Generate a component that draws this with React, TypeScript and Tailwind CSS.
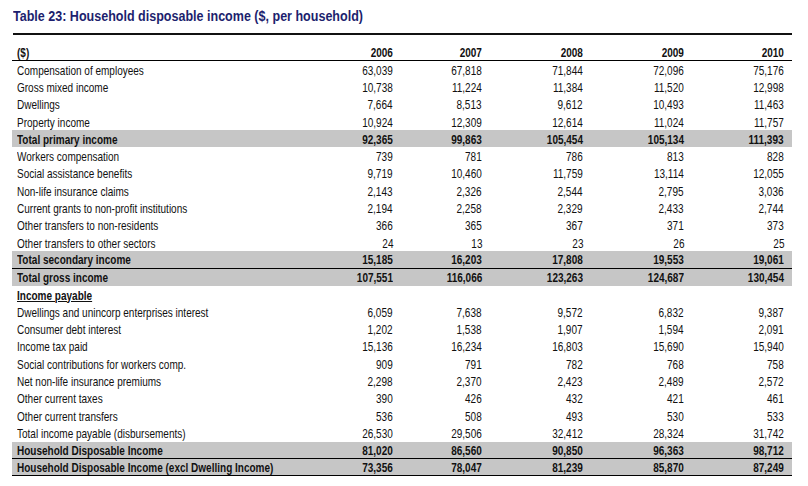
import React from 'react';

type Row = {
  label: string;
  values: string[];
  kind?: 'total' | 'section';
  lineBelow?: boolean;
};

const rows: Row[] = [
  { label: 'Compensation of employees', values: ['63,039', '67,818', '71,844', '72,096', '75,176'] },
  { label: 'Gross mixed income', values: ['10,738', '11,224', '11,384', '11,520', '12,998'] },
  { label: 'Dwellings', values: ['7,664', '8,513', '9,612', '10,493', '11,463'] },
  { label: 'Property income', values: ['10,924', '12,309', '12,614', '11,024', '11,757'] },
  { label: 'Total primary income', values: ['92,365', '99,863', '105,454', '105,134', '111,393'], kind: 'total' },
  { label: 'Workers compensation', values: ['739', '781', '786', '813', '828'] },
  { label: 'Social assistance benefits', values: ['9,719', '10,460', '11,759', '13,114', '12,055'] },
  { label: 'Non-life insurance claims', values: ['2,143', '2,326', '2,544', '2,795', '3,036'] },
  { label: 'Current grants to non-profit institutions', values: ['2,194', '2,258', '2,329', '2,433', '2,744'] },
  { label: 'Other  transfers to non-residents', values: ['366', '365', '367', '371', '373'] },
  { label: 'Other transfers to other sectors', values: ['24', '13', '23', '26', '25'] },
  { label: 'Total secondary income', values: ['15,185', '16,203', '17,808', '19,553', '19,061'], kind: 'total', lineBelow: true },
  { label: 'Total gross income', values: ['107,551', '116,066', '123,263', '124,687', '130,454'], kind: 'total' },
  { label: 'Income payable', values: ['', '', '', '', ''], kind: 'section' },
  { label: 'Dwellings and unincorp enterprises interest', values: ['6,059', '7,638', '9,572', '6,832', '9,387'] },
  { label: 'Consumer debt interest', values: ['1,202', '1,538', '1,907', '1,594', '2,091'] },
  { label: 'Income tax paid', values: ['15,136', '16,234', '16,803', '15,690', '15,940'] },
  { label: 'Social contributions for workers comp.', values: ['909', '791', '782', '768', '758'] },
  { label: 'Net non-life insurance premiums', values: ['2,298', '2,370', '2,423', '2,489', '2,572'] },
  { label: 'Other current taxes', values: ['390', '426', '432', '421', '461'] },
  { label: 'Other current transfers', values: ['536', '508', '493', '530', '533'] },
  { label: 'Total income payable (disbursements)', values: ['26,530', '29,506', '32,412', '28,324', '31,742'] },
  { label: 'Household Disposable Income', values: ['81,020', '86,560', '90,850', '96,363', '98,712'], kind: 'total', lineBelow: true },
  { label: 'Household Disposable Income (excl Dwelling Income)', values: ['73,356', '78,047', '81,239', '85,870', '87,249'], kind: 'total', lineBelow: true },
];

const years = ['2006', '2007', '2008', '2009', '2010'];
const colWidths = ['w-[89px]', 'w-[89px]', 'w-[101px]', 'w-[101px]', 'w-[100px]'];

// no Arial Narrow in the sandbox, so squeeze Liberation Sans horizontally
const Narrow: React.FC<{ right?: boolean; children: React.ReactNode }> = ({ right, children }) => (
  <span className={`inline-block whitespace-nowrap scale-x-[0.77] ${right ? 'origin-right' : 'origin-left'}`}>
    {children}
  </span>
);

const App: React.FC = () => {
  return (
    <div className="w-[808px] h-[486px] bg-white pl-[13px] pr-[16px] pt-[7px] overflow-hidden">
      <h1 className="text-[#1d1f6e] font-bold text-[14px] leading-[18px] font-['Liberation_Sans',Arial,sans-serif] whitespace-nowrap">
        <span className="inline-block scale-x-[0.895] origin-left">
          Table 23: Household disposable income ($, per household)
        </span>
      </h1>

      <div className="mt-[8px] border-t-[2px] border-[#111]" />

      <div className="font-['Liberation_Sans',Arial,sans-serif] text-[13px] leading-[16px] text-[#111] ml-[-1px]">
        <div className="flex items-end h-[26px] border-b border-black font-bold leading-[14px]">
          <div className="w-[300px] pl-[5px]">
            <Narrow>($)</Narrow>
          </div>
          {years.map((y, i) => (
            <div key={y} className={`${colWidths[i]} text-right pr-[8px]`}>
              <Narrow right>{y}</Narrow>
            </div>
          ))}
        </div>

        {rows.map((row, index) => (
          <div
            key={index}
            className={
              'flex items-center h-[17.3px] pt-[2px] ' +
              (row.kind === 'total' ? 'bg-[#c6c6c6] font-bold ' : '') +
              (row.lineBelow ? 'border-b border-black ' : '')
            }
          >
            <div className="w-[300px] pl-[5px]">
              <Narrow>
                {row.kind === 'section' ? <span className="font-bold underline">{row.label}</span> : row.label}
              </Narrow>
            </div>
            {row.values.map((v, i) => (
              <div key={i} className={`${colWidths[i]} text-right pr-[8px]`}>
                <Narrow right>{v}</Narrow>
              </div>
            ))}
          </div>
        ))}
      </div>
    </div>
  );
};

export default App;
